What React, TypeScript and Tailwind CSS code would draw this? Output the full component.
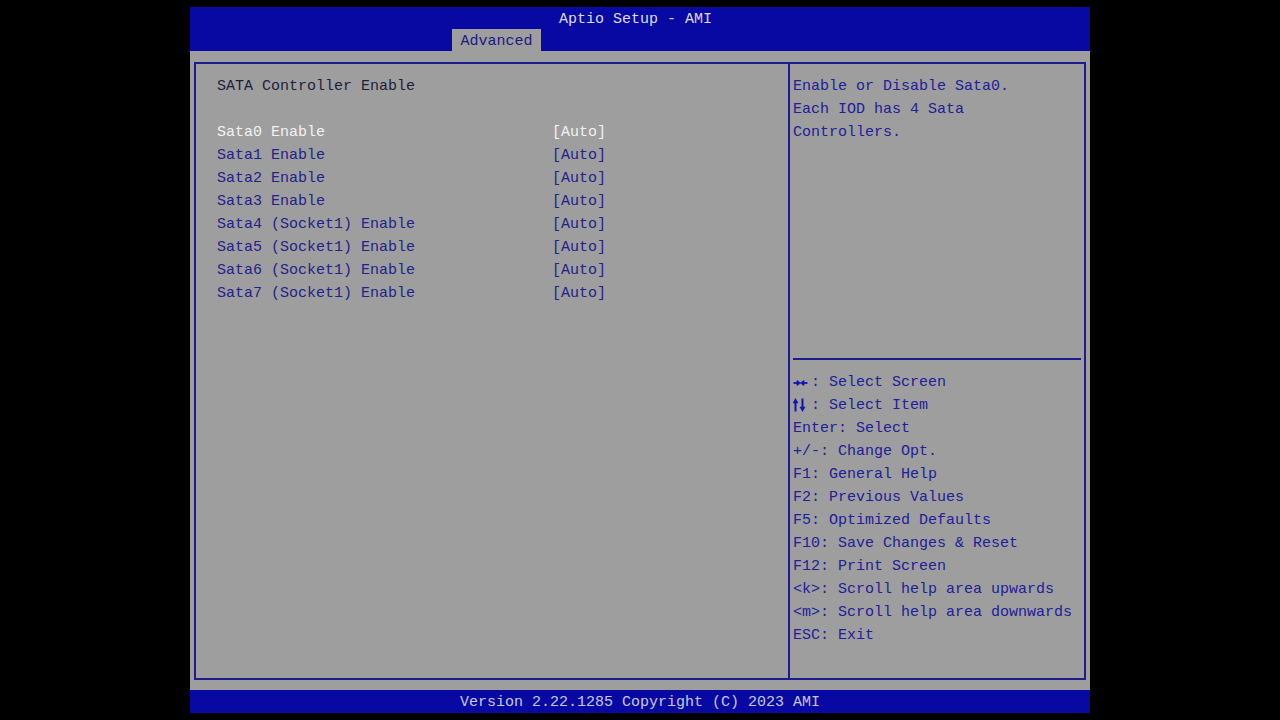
const ITEMS = [
  "Sata0 Enable",
  "Sata1 Enable",
  "Sata2 Enable",
  "Sata3 Enable",
  "Sata4 (Socket1) Enable",
  "Sata5 (Socket1) Enable",
  "Sata6 (Socket1) Enable",
  "Sata7 (Socket1) Enable",
];

const KEYS: [string, string][] = [
  ["Enter", "Select"],
  ["+/-", "Change Opt."],
  ["F1", "General Help"],
  ["F2", "Previous Values"],
  ["F5", "Optimized Defaults"],
  ["F10", "Save Changes & Reset"],
  ["F12", "Print Screen"],
  ["<k>", "Scroll help area upwards"],
  ["<m>", "Scroll help area downwards"],
  ["ESC", "Exit"],
];

function LeftRight() {
  return (
    <svg width="18" height="23" viewBox="0 0 18 23" className="shrink-0">
      <g stroke="#1212b8" strokeWidth="1.8" fill="#1212b8">
        <line x1="0.5" y1="12" x2="6" y2="12" />
        <polygon points="4,9.5 7.5,12 4,14.5" strokeWidth="0.8" />
        <line x1="9" y1="12" x2="14.5" y2="12" />
        <polygon points="11,9.5 7.5,12 11,14.5" strokeWidth="0.8" />
      </g>
    </svg>
  );
}

function UpDown() {
  return (
    <svg width="18" height="23" viewBox="0 0 18 23" className="shrink-0">
      <g stroke="#1212b8" strokeWidth="2" fill="#1212b8">
        <line x1="2.5" y1="7" x2="2.5" y2="17.5" />
        <polygon points="0,9 2.5,4.5 5,9" strokeWidth="0.6" />
        <line x1="9.5" y1="4.5" x2="9.5" y2="15" />
        <polygon points="7,13 9.5,17.5 12,13" strokeWidth="0.6" />
      </g>
    </svg>
  );
}

export default function App() {
  return (
    <div className="w-[1280px] h-[720px] bg-black flex justify-center font-['Liberation_Mono','DejaVu_Sans_Mono',monospace] text-[15px] leading-[23px]">
      <div className="w-[900px] mt-[7px] h-[706px] flex flex-col">
        {/* header */}
        <div className="h-[44px] bg-[#0808a2] flex flex-col">
          <div className="h-[22px] leading-[22px] pt-[2px] text-center pr-[9px] text-[#dcdce8]">Aptio Setup - AMI</div>
          <div className="h-[22px] pl-[262px] flex">
            <div className="w-[89px] h-[22px] leading-[22px] pt-[2px] bg-[#9e9e9e] text-center text-[#1a1a80]">Advanced</div>
          </div>
        </div>

        {/* body */}
        <div className="flex-1 bg-[#9e9e9e] pt-[11px] pl-[4px] pr-[4px] pb-[10px]">
          <div className="h-full border-2 border-[#1c1c8e] flex">
            <div className="w-[594px] border-r-2 border-[#1c1c8e] pl-[21px] pt-[11px]">
              <div className="text-[#1e1e3a]">SATA Controller Enable</div>
              <div className="h-[23px]" />
              {ITEMS.map((label, i) => (
                <div key={label} className={`flex ${i === 0 ? "text-[#f2f2f2]" : "text-[#22228c]"}`}>
                  <span className="w-[335px] whitespace-pre">{label}</span>
                  <span>[Auto]</span>
                </div>
              ))}
            </div>

            <div className="flex-1 flex flex-col pl-[3px] pr-[3px]">
              <div className="h-[294px] pt-[11px] text-[#20209a]">
                <div>Enable or Disable Sata0.</div>
                <div>Each IOD has 4 Sata</div>
                <div>Controllers.</div>
              </div>
              <div className="h-[2px] bg-[#1c1c8e]" />
              <div className="pt-[11px] text-[#20209a] whitespace-pre">
                <div className="flex">
                  <LeftRight />
                  <span>: Select Screen</span>
                </div>
                <div className="flex">
                  <UpDown />
                  <span>: Select Item</span>
                </div>
                {KEYS.map(([k, v]) => (
                  <div key={k}>{`${k}: ${v}`}</div>
                ))}
              </div>
            </div>
          </div>
        </div>

        {/* footer */}
        <div className="h-[23px] leading-[23px] pt-[1px] bg-[#0808a2] text-center text-[#c8c8dc]">
          Version 2.22.1285 Copyright (C) 2023 AMI
        </div>
      </div>
    </div>
  );
}
